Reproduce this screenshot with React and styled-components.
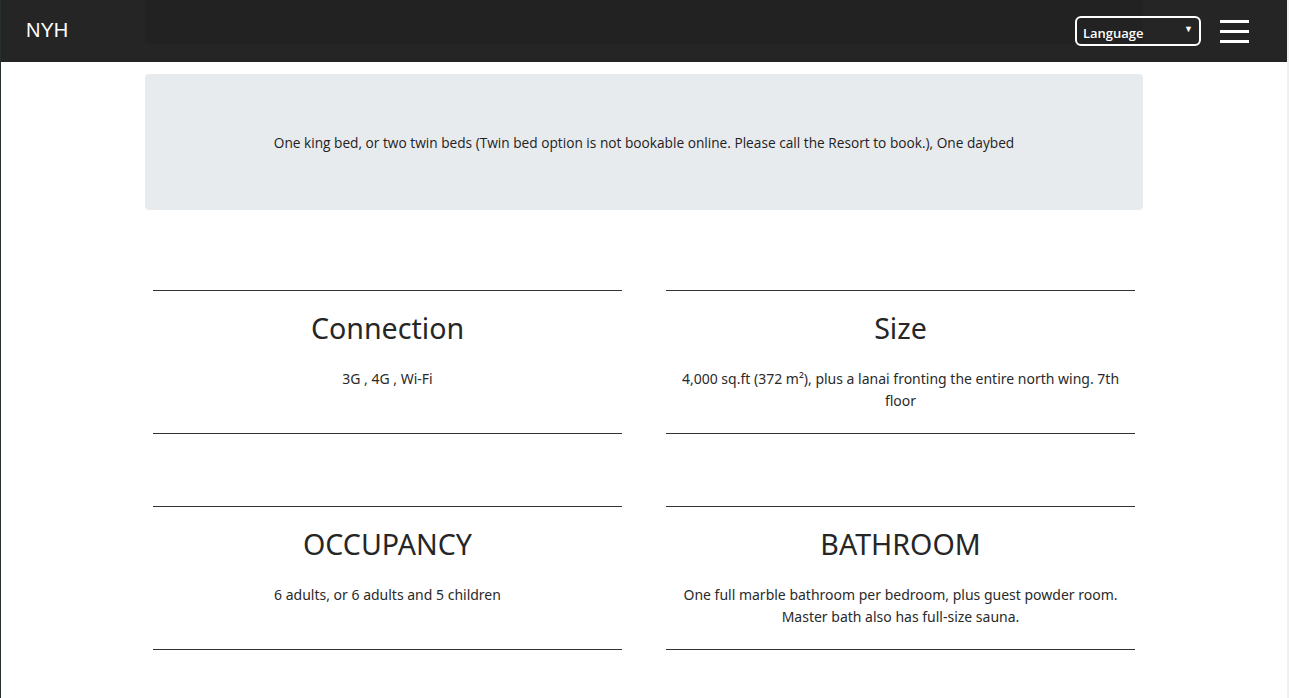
import React from "react";
import styled, { createGlobalStyle } from "styled-components";

const Global = createGlobalStyle`
  * { box-sizing: border-box; }
  html, body { margin: 0; padding: 0; background: #fff; }
  body {
    font-family: "Noto Sans", Roboto, sans-serif;
    color: #222;
    border-left: 1px solid #27302c;
    border-right: 2px solid #efefef;
    min-height: 698px;
  }
`;

const Header = styled.header`
  height: 62px;
  background: #252525;
  display: flex;
  align-items: center;
  justify-content: space-between;
  padding: 0 38px 0 25px;
  position: relative;
`;

const HeaderShade = styled.div`
  position: absolute;
  left: 144px;
  width: 998px;
  top: 0;
  height: 44px;
  background: #222222;
  border-radius: 0 0 4px 4px;
`;

const Brand = styled.span`
  font-family: "Liberation Sans", Arial, sans-serif;
  color: #fff;
  font-size: 20px;
  position: relative;
  top: -1px;
`;

const Actions = styled.div`
  display: flex;
  align-items: center;
  gap: 19px;
  position: relative;
`;

const LangSelect = styled.div`
  width: 126px;
  height: 30px;
  border: 2px solid #fff;
  border-radius: 6px;
  display: flex;
  align-items: center;
  justify-content: space-between;
  padding: 3px 6px 0 6px;
  color: #fff;
  font-family: "Open Sans", sans-serif;
  font-weight: 600;
  font-size: 13px;
`;

const Caret = styled.span`
  font-size: 9px;
  margin-top: -8px;
`;

const Burger = styled.div`
  width: 29px;
  display: flex;
  flex-direction: column;
  gap: 7px;
  span {
    display: block;
    height: 3px;
    background: #fff;
  }
`;

const Container = styled.main`
  width: 998px;
  margin: 12px auto 0;
`;

const Banner = styled.section`
  background: #e8ebee;
  border-radius: 4px;
  height: 136px;
  display: flex;
  align-items: center;
  justify-content: center;
  font-family: "Open Sans", sans-serif;
  font-size: 13.7px;
  color: #222;
`;

const Grid = styled.div`
  display: grid;
  grid-template-columns: 1fr 1fr;
  column-gap: 44px;
  row-gap: 72px;
  padding: 80px 8px 0;
`;

const Card = styled.div`
  border-top: 1px solid #333;
  border-bottom: 1px solid #333;
  padding: 20px 10px 21px;
  text-align: center;
`;

const Title = styled.h3`
  margin: 0 0 23px;
  font-weight: 400;
  font-size: 28.6px;
  line-height: 34px;
  color: #262626;
`;

const Body = styled.p`
  margin: 0;
  font-size: 14px;
  line-height: 22px;
  color: #2a2a2a;
`;

const items = [
  { title: "Connection", text: "3G , 4G , Wi-Fi" },
  { title: "Size", text: "4,000 sq.ft (372 m²), plus a lanai fronting the entire north wing. 7th floor" },
  { title: "OCCUPANCY", text: "6 adults, or 6 adults and 5 children" },
  { title: "BATHROOM", text: "One full marble bathroom per bedroom, plus guest powder room. Master bath also has full-size sauna." },
];

export default function App() {
  return (
    <>
      <Global />
      <Header>
        <HeaderShade />
        <Brand>NYH</Brand>
        <Actions>
          <LangSelect>
            <span>Language</span>
            <Caret>▼</Caret>
          </LangSelect>
          <Burger>
            <span />
            <span />
            <span />
          </Burger>
        </Actions>
      </Header>
      <Container>
        <Banner>
          One king bed, or two twin beds (Twin bed option is not bookable online. Please call the Resort to book.), One daybed
        </Banner>
        <Grid>
          {items.map((it) => (
            <Card key={it.title}>
              <Title>{it.title}</Title>
              <Body>{it.text}</Body>
            </Card>
          ))}
        </Grid>
      </Container>
    </>
  );
}
